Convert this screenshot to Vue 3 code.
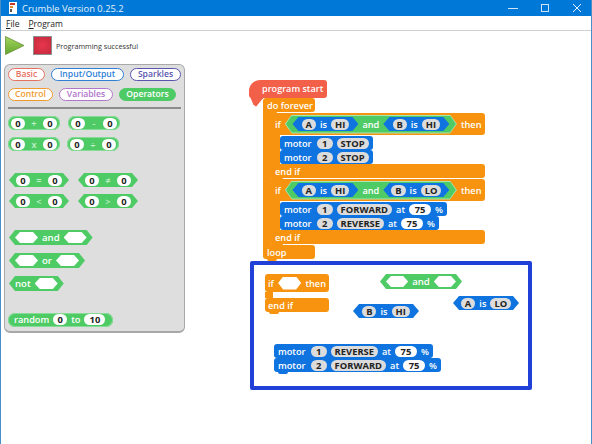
<template>
  <div class="window">
    <div class="titlebar">
      <svg class="app-icon" width="10" height="12" viewBox="0 0 10 12"><rect x="1" y="0" width="8" height="12" fill="#fff"/><rect x="2" y="1" width="5" height="2" fill="#c0392b"/><rect x="2" y="4" width="3" height="2" fill="#e08a2c"/><rect x="2" y="7" width="2" height="3" fill="#555"/></svg>
      <span class="title">Crumble Version 0.25.2</span>
      <div class="win-btns">
        <svg width="10" height="10" viewBox="0 0 10 10"><path d="M0 5.5H10" stroke="#cfe6fa" stroke-width="1"/></svg>
        <svg width="10" height="10" viewBox="0 0 10 10"><rect x="1.5" y="1.5" width="7" height="7" fill="none" stroke="#cfe6fa"/></svg>
        <svg width="10" height="10" viewBox="0 0 10 10"><path d="M1 1L9 9M9 1L1 9" stroke="#e6f2fc" stroke-width="1"/></svg>
      </div>
    </div>
    <div class="menubar">
      <span><u>F</u>ile</span>
      <span><u>P</u>rogram</span>
    </div>
    <div class="toolbar">
      <svg class="play" width="20" height="20" viewBox="0 0 20 20">
        <defs><linearGradient id="pg" x1="0" y1="0" x2="0" y2="1"><stop offset="0" stop-color="#a4d65e"/><stop offset="1" stop-color="#62a52c"/></linearGradient></defs>
        <path d="M0.5 0.5L19 9.5L0.5 18.5Z" fill="url(#pg)" stroke="#6b8f3a" stroke-width="0.8"/>
      </svg>
      <div class="stop"></div>
      <span class="status">Programming successful</span>
    </div>

    <div class="main">
      <div class="palette">
        <div class="tabs">
          <span v-for="t in tabs" :key="t.name" class="tab" :class="t.cls">{{ t.name }}</span>
        </div>
        <div class="sep"></div>

        <div class="pal-row first">
          <span class="blk green round"><i class="num">0</i><b class="op">+</b><i class="num">0</i></span>
          <span class="blk green round"><i class="num">0</i><b class="op">-</b><i class="num">0</i></span>
        </div>
        <div class="pal-row r2">
          <span class="blk green round"><i class="num">0</i><b class="op">x</b><i class="num">0</i></span>
          <span class="blk green round"><i class="num">0</i><b class="op">÷</b><i class="num">0</i></span>
        </div>

        <div class="pal-row r3">
          <span class="blk green hex cmp"><i class="num">0</i><b class="op">=</b><i class="num">0</i></span>
          <span class="blk green hex cmp"><i class="num">0</i><b class="op">≠</b><i class="num">0</i></span>
        </div>
        <div class="pal-row r4">
          <span class="blk green hex cmp"><i class="num">0</i><b class="op">&lt;</b><i class="num">0</i></span>
          <span class="blk green hex cmp"><i class="num">0</i><b class="op">&gt;</b><i class="num">0</i></span>
        </div>

        <div class="pal-col">
          <span class="blk green hex logic"><i class="slot"></i><b>and</b><i class="slot"></i></span>
          <span class="blk green hex logic"><i class="slot"></i><b>or</b><i class="slot"></i></span>
          <span class="blk green hex logic"><b>not</b><i class="slot"></i></span>
        </div>

        <div class="pal-random">
          <span class="blk green round rnd"><b>random</b><i class="num">0</i><b>to</b><i class="num wide">10</i></span>
        </div>
      </div>

      <div class="workspace">
        <div class="script program">
          <div class="hat">program start</div>
          <div class="cblock forever">
            <div class="bar orange short top">do forever</div>
            <div class="arm">
              <div class="cblock" v-for="(ifb, i) in ifs" :key="i">
                <div class="bar orange head">
                  <b>if</b>
                  <span class="outline">
                    <span class="hex cond">
                      <span class="blk blue hex test"><i class="pill">A</i><b>is</b><i class="pill">HI</i></span>
                      <b class="and">and</b>
                      <span class="blk blue hex test"><i class="pill">B</i><b>is</b><i class="pill">{{ ifb.b }}</i></span>
                    </span>
                  </span>
                  <b class="then">then</b>
                </div>
                <div class="arm inner">
                  <div v-for="m in ifb.motors" :key="m.n" class="blk blue motor">
                    <b class="word">motor</b><i class="pill digit">{{ m.n }}</i><i class="pill">{{ m.dir }}</i>
                    <template v-if="m.speed"><b>at</b><i class="num speed">{{ m.speed }}</i><b>%</b></template>
                  </div>
                </div>
                <div class="bar orange foot">end if</div>
              </div>
            </div>
            <div class="bar orange short">loop</div>
          </div>
        </div>

        <div class="highlight"></div>

        <div class="script loose-if">
          <div class="bar orange loose-head"><b>if</b><i class="slot"></i><b>then</b></div>
          <div class="arm gap"></div>
          <div class="bar orange loose-foot">end if</div>
        </div>
        <span class="script blk green hex logic loose-and"><i class="slot"></i><b>and</b><i class="slot"></i></span>
        <span class="script blk blue hex test loose-a"><i class="pill">A</i><b>is</b><i class="pill">LO</i></span>
        <span class="script blk blue hex test loose-b"><i class="pill">B</i><b>is</b><i class="pill">HI</i></span>
        <div class="script loose-motors">
          <div v-for="m in looseMotors" :key="m.n" class="blk blue motor">
            <b class="word">motor</b><i class="pill digit">{{ m.n }}</i><i class="pill">{{ m.dir }}</i><b>at</b><i class="num speed">{{ m.speed }}</i><b>%</b>
          </div>
        </div>
      </div>
    </div>
  </div>
</template>

<script setup>
const tabs = [
  { name: 'Basic', cls: 'basic' },
  { name: 'Input/Output', cls: 'io' },
  { name: 'Sparkles', cls: 'sparkles' },
  { name: 'Control', cls: 'control' },
  { name: 'Variables', cls: 'variables' },
  { name: 'Operators', cls: 'operators' }
]

const ifs = [
  { b: 'HI', motors: [{ n: 1, dir: 'STOP' }, { n: 2, dir: 'STOP' }] },
  { b: 'LO', motors: [{ n: 1, dir: 'FORWARD', speed: 75 }, { n: 2, dir: 'REVERSE', speed: 75 }] }
]

const looseMotors = [
  { n: 1, dir: 'REVERSE', speed: 75 },
  { n: 2, dir: 'FORWARD', speed: 75 }
]
</script>

<style>
html, body { margin: 0; background: #fff; }
</style>

<style scoped>
.window {
  width: 592px;
  height: 444px;
  box-sizing: border-box;
  border-left: 1px solid #4a90c8;
  border-right: 1px solid #4a90c8;
  overflow: hidden;
  background: #fff;
  font-family: "Open Sans", "Liberation Sans", sans-serif;
}
.window i { font-style: normal; }
.window b { font-weight: 600; }

.titlebar {
  height: 16px;
  margin: 0 -1px;
  background: #0078d7;
  color: #e4f1fb;
  font-size: 9.4px;
  display: flex;
  align-items: center;
  padding-left: 8px;
}
.title { margin-left: 4px; }
.win-btns { margin-left: auto; display: flex; gap: 22px; margin-right: 10px; }
.win-btns svg { display: block; }

.menubar {
  height: 15px;
  padding-top: 1px;
  box-sizing: border-box;
  border-bottom: 1px solid #cfcfcf;
  display: flex;
  align-items: center;
  gap: 9px;
  padding-left: 5px;
  font-size: 8.5px;
  color: #222;
}

.toolbar {
  height: 29px;
  display: flex;
  align-items: center;
  padding-left: 4px;
}
.stop {
  width: 17px;
  height: 17px;
  margin-left: 8px;
  background: radial-gradient(circle at 50% 50%, #e8364e, #c42a3c);
  border: 1px solid #8e8e8e;
}
.status { margin-left: 4px; font-size: 7.2px; color: #333; }

.main { position: relative; display: flex; height: 384px; }

.palette {
  width: 181px;
  height: 269px;
  margin: 4px 0 0 3px;
  box-sizing: border-box;
  background: #dedede;
  border: 1px solid #a8a8a8;
  border-bottom-width: 2px;
  border-radius: 6px;
  padding: 3px 3px 0;
  display: flex;
  flex-direction: column;
  align-items: flex-start;
}
.tabs { display: flex; flex-wrap: wrap; gap: 7px 6px; width: 174px; }
.tab {
  height: 13px;
  box-sizing: border-box;
  border: 1px solid;
  border-radius: 7px;
  background: #fff;
  font-size: 8.6px;
  font-weight: 600;
  line-height: 11px;
  padding: 0 6px;
  text-align: center;
}
.basic { width: 37px; color: #e8705f; border-color: #e8705f; }
.io { width: 73px; color: #2f7fd6; border-color: #2f7fd6; }
.sparkles { width: 51px; color: #5a55b0; border-color: #5a55b0; }
.control { width: 45px; color: #f09a2e; border-color: #f09a2e; }
.variables { width: 54px; color: #b076cc; border-color: #b076cc; }
.operators { width: 57px; color: #fff; border-color: #4fcb66; background: #4fcb66; }
.sep { width: 173px; height: 2px; background: #8c8c8c; margin-top: 6px; }

.pal-row { display: flex; }
.first { margin-top: 7px; gap: 8px; }
.r2 { margin-top: 7px; gap: 7px; }
.r3 { margin-top: 22px; gap: 9px; margin-left: 1px; }
.r4 { margin-top: 7px; gap: 9px; margin-left: 1px; }
.pal-col { display: flex; flex-direction: column; align-items: flex-start; gap: 8px; margin-top: 22px; margin-left: 1px; }
.pal-random { margin-top: 15px; }

.blk {
  display: inline-flex;
  align-items: center;
  height: 14px;
  box-sizing: border-box;
  color: #fff;
  font-size: 9.2px;
  white-space: nowrap;
}
.green { background: #4fcb66; }
.blue { background: #0f74e0; }
.round { border-radius: 8px; padding: 0 3px; gap: 4px; box-shadow: inset 0 0 0 1px #86dc96; }
.op { width: 10px; text-align: center; color: #c4f0cc; }

.hex { clip-path: polygon(6px 0, calc(100% - 6px) 0, 100% 50%, calc(100% - 6px) 100%, 6px 100%, 0 50%); }
.cmp { width: 60px; justify-content: center; gap: 4px; }

.num, .pill {
  display: inline-block;
  height: 11px;
  line-height: 11px;
  min-width: 14px;
  box-sizing: border-box;
  padding: 0 4px;
  border-radius: 6px;
  text-align: center;
  font-size: 9.4px;
  font-weight: 700;
  color: #222;
  background: #fff;
}
.wide { min-width: 21px; }
.pill { background: #dcdcdc; }
.digit { min-width: 16px; }
.speed { min-width: 22px; }
.word { margin-right: 1px; }

.logic { height: 15px; padding: 0 6px; gap: 4px; font-size: 9.6px; }
.slot {
  display: inline-block;
  width: 23px;
  height: 11px;
  background: #fff;
  clip-path: polygon(5px 0, calc(100% - 5px) 0, 100% 50%, calc(100% - 5px) 100%, 5px 100%, 0 50%);
}
.rnd { width: 105px; gap: 4px; padding-left: 6px; }

/* free canvas: scripts sit where they were dropped */
.workspace { position: absolute; left: 187px; top: 0; width: 400px; height: 384px; }
.script { position: absolute; }

.program { left: 61px; top: 20px; width: 240px; }
.hat {
  position: relative;
  width: 78px;
  height: 18px;
  box-sizing: border-box;
  background: #f2604a;
  color: #fff;
  font-size: 9.1px;
  font-weight: 600;
  line-height: 17px;
  padding-left: 13px;
  border-radius: 11px 3px 3px 3px;
}
.hat::after {
  content: "";
  position: absolute;
  left: 0;
  top: 14px;
  width: 14px;
  height: 17px;
  background: #f2604a;
  clip-path: polygon(0 0, 100% 0, 100% 25%, 50% 75%, 30% 60%);
}

.forever { margin-left: 14px; }
.cblock { position: relative; }
.bar {
  box-sizing: border-box;
  color: #fff;
  font-size: 9.2px;
  font-weight: 600;
  display: flex;
  align-items: center;
  border-radius: 3px;
  position: relative;
}
.orange { background: #f7930e; }
.short { width: 52px; height: 14px; padding-left: 4px; border-top-left-radius: 0; }
.short.top { border-radius: 3px 3px 3px 0; }
.arm { border-left: 8px solid #f7930e; padding: 1px 0; display: flex; flex-direction: column; gap: 1px; }

.head { width: 214px; height: 22px; padding: 0 4px; gap: 4px; border-radius: 0 3px 3px 0; }
.foot { width: 214px; height: 14px; padding-left: 4px; border-radius: 0 3px 3px 0; }
.inner { border-left-width: 9px; padding: 1px 0 0; gap: 0; }
.then { margin-left: auto; }

.outline {
  display: inline-flex;
  background: #a6e8b4;
  padding: 1px;
  clip-path: polygon(7px 0, calc(100% - 7px) 0, 100% 50%, calc(100% - 7px) 100%, 7px 100%, 0 50%);
}
.cond {
  display: inline-flex;
  align-items: center;
  width: 170px;
  height: 17px;
  justify-content: center;
  gap: 4px;
  background: #4fcb66;
}
.and { color: #fff; }
.test { width: 66px; justify-content: center; gap: 4px; }

.motor {
  position: relative;
  display: flex;
  width: fit-content;
  height: 14px;
  border-radius: 3px;
  padding: 0 4px;
  gap: 4px;
}
.motor::after,
.foot::after,
.short::after,
.loose-foot::after {
  content: "";
  position: absolute;
  left: 4px;
  bottom: -2px;
  width: 10px;
  height: 2px;
  background: inherit;
  border-radius: 0 0 4px 4px;
}
.foot::after { left: 0; width: 12px; }

.highlight {
  position: absolute;
  left: 62px;
  top: 201px;
  width: 282px;
  height: 129px;
  box-sizing: border-box;
  border: 4px solid #2040d8;
  border-radius: 2px;
}

.loose-if { left: 77px; top: 214px; width: 64px; }
.loose-head { height: 18px; padding: 0 3px; gap: 4px; justify-content: space-between; }
.loose-head .slot { height: 13px; }
.gap { height: 6px; padding: 0; }
.loose-foot { height: 14px; padding-left: 3px; }
.loose-and { left: 192px; top: 214px; width: 82px; }
.loose-a { left: 265px; top: 236px; }
.loose-b { left: 165px; top: 244px; }
.loose-motors { left: 86px; top: 284px; display: flex; flex-direction: column; }
</style>
